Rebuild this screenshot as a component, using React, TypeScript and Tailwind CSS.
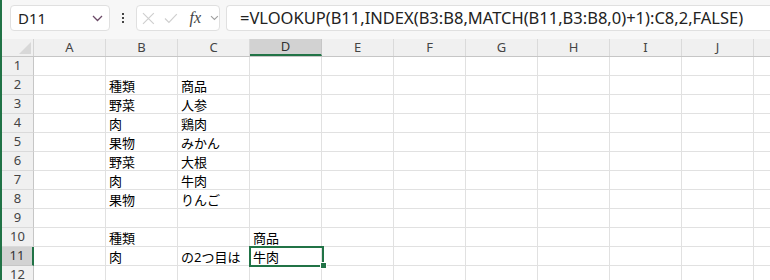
import { ReactNode } from "react";

const COLS = ["A", "B", "C", "D", "E", "F", "G", "H", "I", "J", ""];

// row number -> { columnLetter: text }
const DATA: Record<number, Record<string, string>> = {
  2: { B: "種類", C: "商品" },
  3: { B: "野菜", C: "人参" },
  4: { B: "肉", C: "鶏肉" },
  5: { B: "果物", C: "みかん" },
  6: { B: "野菜", C: "大根" },
  7: { B: "肉", C: "牛肉" },
  8: { B: "果物", C: "りんご" },
  10: { B: "種類", D: "商品" },
  11: { B: "肉", C: "の2つ目は", D: "牛肉" },
};

const ROWS = Array.from({ length: 12 }, (_, i) => i + 1);

function Cell({ children }: { children?: ReactNode }) {
  return (
    <div className="w-[72px] shrink-0 h-full border-r border-b border-[#e1e1e1] px-[3px] flex items-end pb-[1px] text-[13px] leading-none text-black whitespace-nowrap overflow-visible">
      {children}
    </div>
  );
}

export default function App() {
  return (
    <div
      className="relative w-[770px] h-[280px] overflow-hidden bg-white border-l-2 border-[#217346]"
      style={{ fontFamily: '"Noto Sans", "Noto Sans CJK JP", sans-serif' }}
    >
      {/* Formula bar */}
      <div className="h-[39px] bg-[#f7f7f7] flex items-start pt-[5px] pl-[8px] gap-[6px]">
        <div className="w-[100px] h-[26px] bg-white border border-[#e0e0e0] rounded-[4px] flex items-center justify-between pl-[7px] pr-[6px]">
          <span className="text-[15px] text-[#222]">D11</span>
          <svg width="11" height="7" viewBox="0 0 11 7" fill="none">
            <path d="M1 1l4.5 4.5L10 1" stroke="#6b4a66" strokeWidth="1.3" />
          </svg>
        </div>
        <div className="w-[14px] h-[26px] flex flex-col items-center justify-center gap-[2px]">
          <span className="w-[2px] h-[2px] bg-[#444]" />
          <span className="w-[2px] h-[2px] bg-[#444]" />
          <span className="w-[2px] h-[2px] bg-[#444]" />
        </div>
        <div className="w-[84px] h-[26px] bg-white border border-[#e0e0e0] rounded-[4px] flex items-center pl-[5px] gap-[9px]">
          <svg width="13" height="13" viewBox="0 0 13 13" fill="none">
            <path d="M1 1l11 11M12 1L1 12" stroke="#cfcfcf" strokeWidth="1.2" />
          </svg>
          <svg width="14" height="11" viewBox="0 0 14 11" fill="none">
            <path d="M1 5.5l4 4L13 1" stroke="#cfcfcf" strokeWidth="1.2" />
          </svg>
          <span
            className="ml-[3px] text-[16px] italic text-[#444] leading-none"
            style={{ fontFamily: '"Liberation Serif", serif' }}
          >
            <i className="font-normal">f</i>x
          </span>
          <svg width="9" height="6" viewBox="0 0 9 6" fill="none">
            <path d="M1 1l3.5 3.5L8 1" stroke="#a0a0a0" strokeWidth="1.1" />
          </svg>
        </div>
        <div className="flex-1 h-[26px] bg-white border border-[#e0e0e0] border-r-0 rounded-l-[4px] flex items-center pl-[13px]">
          <span className="text-[16.5px] text-[#222] whitespace-nowrap">
            =VLOOKUP(B11,INDEX(B3:B8,MATCH(B11,B3:B8,0)+1):C8,2,FALSE)
          </span>
        </div>
      </div>

      {/* Column headers */}
      <div className="h-[18px] flex bg-[#f0f0f0] border-b border-[#c6c6c6]">
        <div className="w-[32px] shrink-0 h-full border-r border-[#d4d4d4] flex items-end justify-end p-[2px]">
          <svg width="12" height="12" viewBox="0 0 12 12">
            <path d="M12 0V12H0Z" fill="#d8d8d8" />
          </svg>
        </div>
        {COLS.map((c, i) => (
          <div
            key={i}
            className={
              c === "D"
                ? "w-[72px] shrink-0 h-full border-r border-[#c6c6c6] bg-[#d2d2d2] border-b-2 border-b-[#217346] flex items-center justify-center text-[13px] text-[#333]"
                : "w-[72px] shrink-0 h-full border-r border-[#dadada] flex items-center justify-center text-[13px] text-[#444]"
            }
          >
            {c}
          </div>
        ))}
      </div>

      {/* Rows */}
      {ROWS.map((r) => (
        <div key={r} className="h-[19px] flex">
          <div
            className={
              r === 11
                ? "w-[32px] shrink-0 h-full bg-[#d2d2d2] border-r-2 border-[#217346] border-b border-b-[#c6c6c6] flex items-center justify-center text-[13px] text-[#333]"
                : "w-[32px] shrink-0 h-full bg-[#f0f0f0] border-r border-[#c6c6c6] border-b border-b-[#dadada] flex items-center justify-center text-[13px] text-[#444]"
            }
          >
            {r}
          </div>
          {COLS.map((c, i) => (
            <Cell key={i}>{c ? DATA[r]?.[c] : null}</Cell>
          ))}
        </div>
      ))}

      {/* Active cell D11 */}
      <div className="absolute left-[247px] top-[246px] w-[75px] h-[21px] border-2 border-[#217346]" />
      <div className="absolute left-[318px] top-[262px] w-[7px] h-[7px] bg-[#217346] border border-white" />
    </div>
  );
}
